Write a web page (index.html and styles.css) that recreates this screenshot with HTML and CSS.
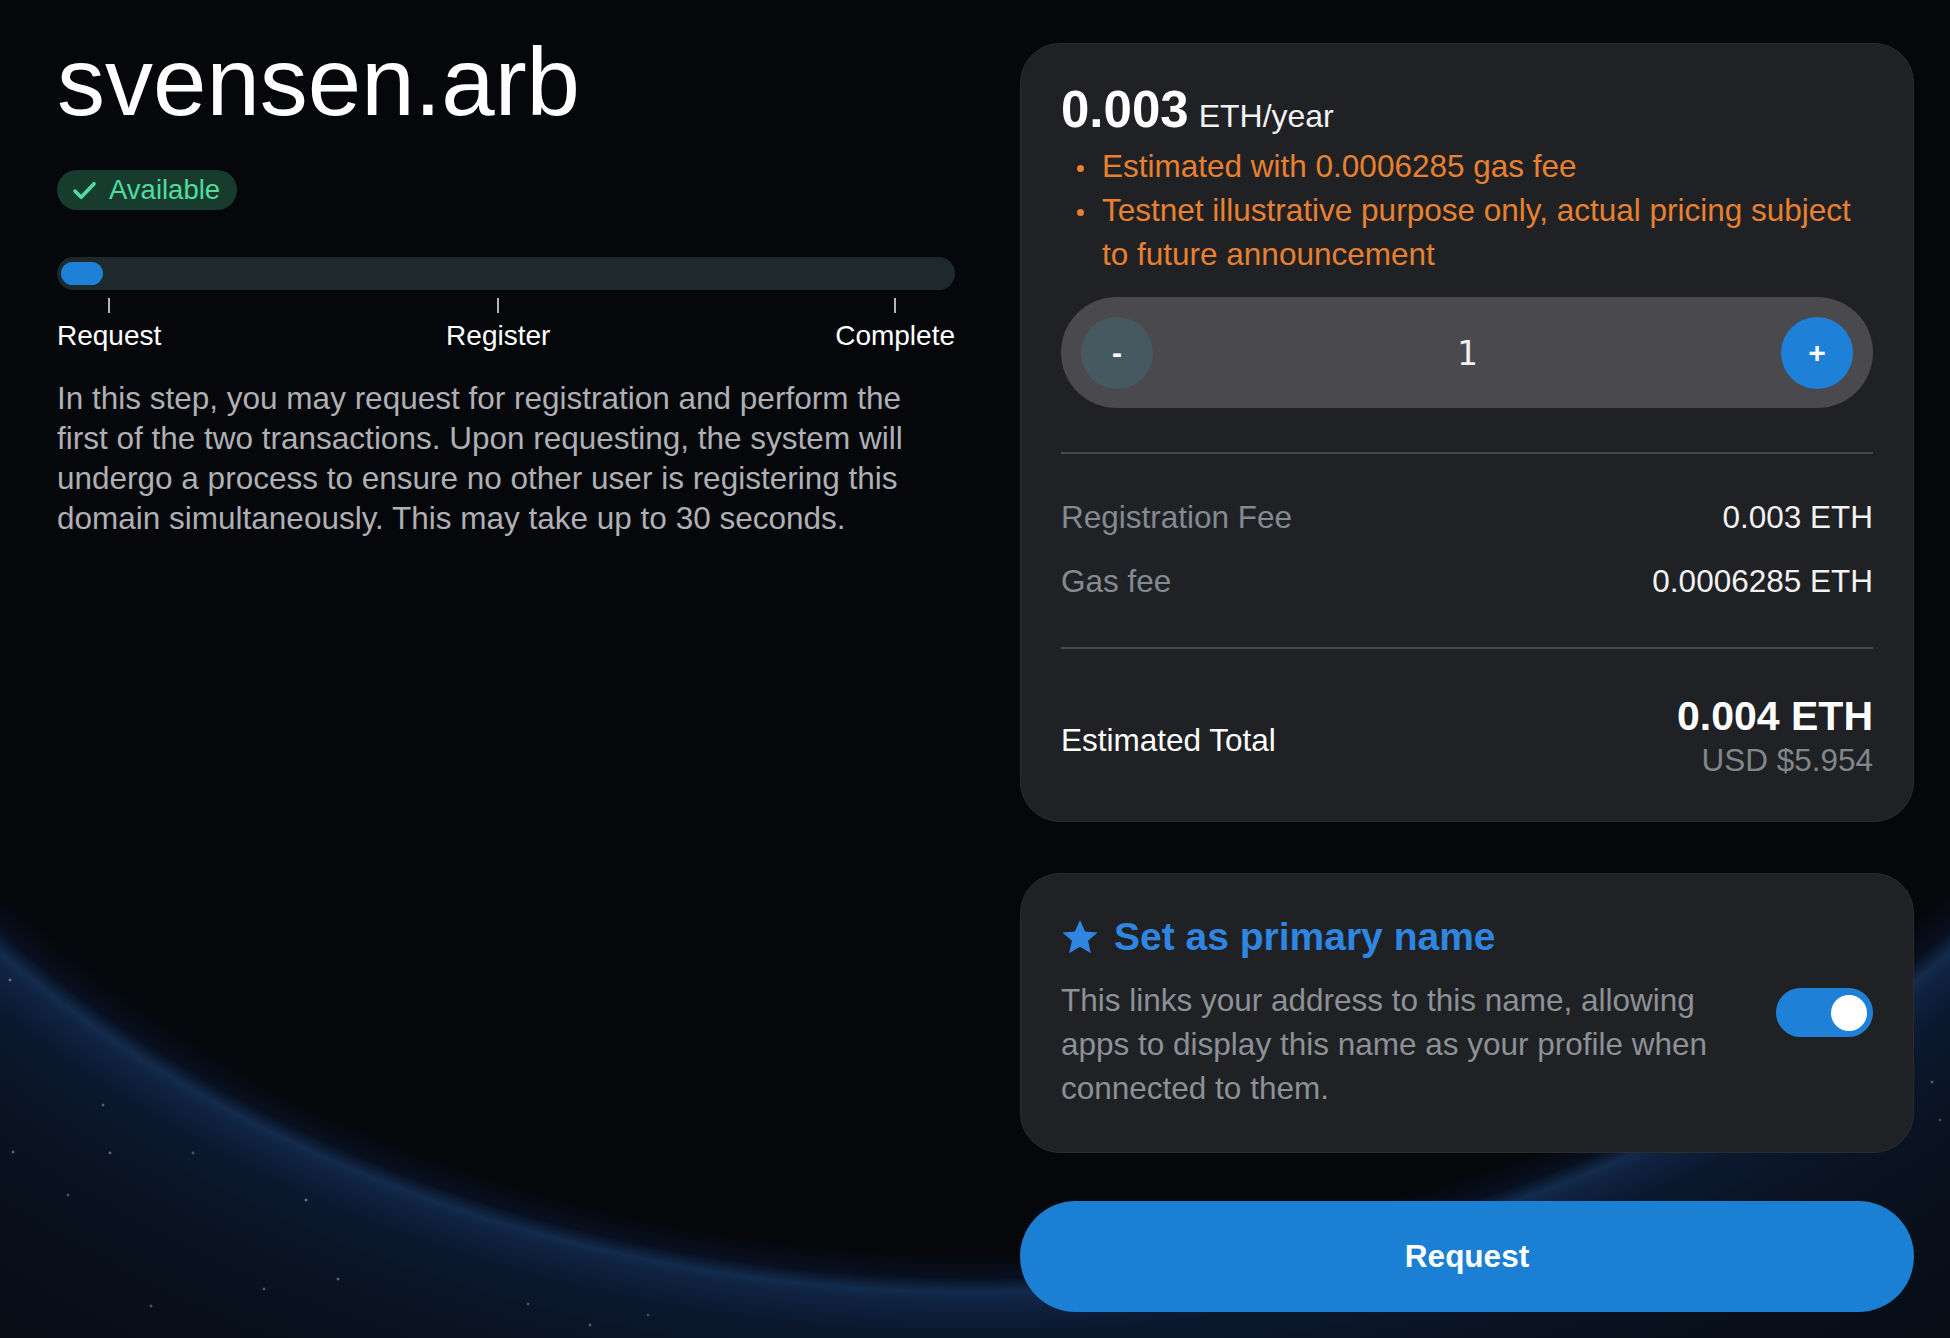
FILE: index.html
```html
<!DOCTYPE html>
<html lang="en">
<head>
    <meta charset="UTF-8">
    <meta name="viewport" content="width=device-width, initial-scale=1.0">
    <title>svensen.arb - Register</title>
    <link rel="stylesheet" href="styles.css">
</head>
<body>
    <main class="page">
        <section class="intro">
            <h1 class="domain">svensen.arb</h1>
            <span class="badge">
                <svg viewBox="0 0 24 24" fill="none" stroke="currentColor" stroke-width="3.2" stroke-linecap="round" stroke-linejoin="round"><polyline points="3.5 12.5 9 18 20.5 6"></polyline></svg>
                Available
            </span>

            <div class="progress"><div class="progress-fill"></div></div>
            <ol class="steps">
                <li class="step"><span class="tick"></span>Request</li>
                <li class="step"><span class="tick"></span>Register</li>
                <li class="step"><span class="tick"></span>Complete</li>
            </ol>

            <p class="intro-text">In this step, you may request for registration and perform the first of the two transactions. Upon requesting, the system will undergo a process to ensure no other user is registering this domain simultaneously. This may take up to 30 seconds.</p>
        </section>

        <section class="checkout">
            <div class="card price-card">
                <div class="price">
                    <strong class="price-value">0.003</strong>
                    <span class="price-unit">ETH/year</span>
                </div>
                <ul class="notes">
                    <li><span class="dot"></span><span>Estimated with 0.0006285 gas fee</span></li>
                    <li><span class="dot"></span><span>Testnet illustrative purpose only, actual pricing subject to future announcement</span></li>
                </ul>

                <div class="counter">
                    <button class="counter-btn minus">-</button>
                    <span class="counter-value">1</span>
                    <button class="counter-btn plus">+</button>
                </div>

                <div class="fees">
                    <div class="fee-row"><span class="fee-label">Registration Fee</span><span>0.003 ETH</span></div>
                    <div class="fee-row"><span class="fee-label">Gas fee</span><span>0.0006285 ETH</span></div>
                </div>

                <div class="total">
                    <span class="total-label">Estimated Total</span>
                    <div class="total-amount">
                        <div class="total-eth">0.004 ETH</div>
                        <div class="total-usd">USD $5.954</div>
                    </div>
                </div>
            </div>

            <div class="card primary-card">
                <h3 class="primary-title">
                    <svg viewBox="0 0 24 24" fill="currentColor"><path d="M12 1.2l3.2 7.3 7.9.7-6 5.2 1.8 7.8L12 18.1l-6.9 4.1 1.8-7.8-6-5.2 7.9-.7z"/></svg>
                    Set as primary name
                </h3>
                <div class="primary-body">
                    <p class="primary-text">This links your address to this name, allowing apps to display this name as your profile when connected to them.</p>
                    <div class="toggle"><span class="knob"></span></div>
                </div>
            </div>

            <button class="request-btn">Request</button>
        </section>
    </main>
</body>
</html>
```

FILE: styles.css
```css
* {
    box-sizing: border-box;
}
html {
    height: 100%;
    background-color: #05070b;
    background-repeat: no-repeat;
    /* a few stars, then the blue horizon arc round the lower half */
    background-image:
        radial-gradient(circle at 10px 980px, rgba(190,200,220,.5) 0 1px, transparent 1.8px),
        radial-gradient(circle at 103px 1105px, rgba(190,200,220,.4) 0 1px, transparent 1.8px),
        radial-gradient(circle at 13px 1152px, rgba(190,200,220,.45) 0 1px, transparent 1.8px),
        radial-gradient(circle at 110px 1153px, rgba(190,200,220,.45) 0 1px, transparent 1.8px),
        radial-gradient(circle at 193px 1153px, rgba(190,200,220,.35) 0 1px, transparent 1.8px),
        radial-gradient(circle at 68px 1195px, rgba(190,200,220,.35) 0 1px, transparent 1.8px),
        radial-gradient(circle at 306px 1200px, rgba(190,200,220,.5) 0 1px, transparent 1.8px),
        radial-gradient(circle at 264px 1289px, rgba(190,200,220,.4) 0 1px, transparent 1.8px),
        radial-gradient(circle at 338px 1279px, rgba(190,200,220,.45) 0 1px, transparent 1.8px),
        radial-gradient(circle at 151px 1306px, rgba(190,200,220,.35) 0 1px, transparent 1.8px),
        radial-gradient(circle at 528px 1304px, rgba(190,200,220,.35) 0 1px, transparent 1.8px),
        radial-gradient(circle at 590px 1325px, rgba(190,200,220,.4) 0 1px, transparent 1.8px),
        radial-gradient(circle at 648px 1315px, rgba(190,200,220,.3) 0 1px, transparent 1.8px),
        radial-gradient(circle at 1932px 1082px, rgba(190,200,220,.4) 0 1px, transparent 1.8px),
        radial-gradient(circle at 1940px 1120px, rgba(190,200,220,.3) 0 1px, transparent 1.8px),
        radial-gradient(ellipse 1300px 1003px at 975px 290px,
            #05070b 0%, #05070b 96%, #081020 98.5%, #132b4c 99.9%, #0f2240 101%,
            #0b182e 104%, #09121f 112%, #070c16 130%);
}
body {
    margin: 0;
    min-height: 100%;
    font-family: "Liberation Sans", Arial, sans-serif;
    color: #f2f2f2;
}

.page {
    display: flex;
    gap: 65px;
    padding: 34px 36px 0 57px;
}

/* left column */
.intro {
    width: 898px;
    display: flex;
    flex-direction: column;
    align-items: flex-start;
}
.domain {
    margin: 0;
    font-size: 96px;
    line-height: 96px;
    font-weight: 400;
    color: #fff;
}
.badge {
    margin-top: 40px;
    height: 40px;
    display: inline-flex;
    align-items: center;
    gap: 11px;
    padding: 0 17px 0 14px;
    border-radius: 20px;
    background: #173b2d;
    color: #4fdc9f;
    font-size: 27.5px;
}
.badge svg {
    width: 27px;
    height: 27px;
}
.progress {
    margin-top: 47px;
    width: 100%;
    height: 33px;
    padding: 5px 4px;
    border-radius: 17px;
    background: #1d292b;
}
.progress-fill {
    width: 42px;
    height: 23px;
    border-radius: 12px;
    background: #1f80d8;
}
.steps {
    list-style: none;
    margin: 8px 0 0;
    padding: 0;
    width: 100%;
    display: flex;
    justify-content: space-between;
}
.step {
    display: flex;
    flex-direction: column;
    align-items: center;
    gap: 7px;
    font-size: 28px;
    line-height: 32px;
    color: #fff;
}
.tick {
    width: 2px;
    height: 15px;
    background: #b5b5b5;
}
.intro-text {
    margin: 26px 0 0;
    font-size: 31.5px;
    line-height: 40px;
    color: #afb0b4;
}

/* right column */
.checkout {
    width: 894px;
    padding-top: 9px;
    display: flex;
    flex-direction: column;
}
.card {
    background: #202124;
    border: 1px solid #2b2c30;
    border-radius: 40px;
}
.price-card {
    padding: 40px 40px 41px;
}
.price {
    display: flex;
    align-items: baseline;
    gap: 10px;
}
.price-value {
    font-size: 51px;
    line-height: 51px;
    font-weight: 700;
    color: #fff;
}
.price-unit {
    font-size: 32px;
    line-height: 32px;
}
.notes {
    list-style: none;
    margin: 9px 0 0;
    padding: 0;
    color: #e8812f;
    font-size: 31.5px;
    line-height: 44px;
}
.notes li {
    display: flex;
    gap: 18px;
    padding-left: 16px;
}
.dot {
    flex-shrink: 0;
    width: 7px;
    height: 7px;
    margin-top: 21px;
    border-radius: 50%;
    background: currentColor;
}
.counter {
    margin-top: 21px;
    height: 111px;
    padding: 0 20px;
    border-radius: 56px;
    background: #4a494e;
    display: flex;
    align-items: center;
    justify-content: space-between;
}
.counter-btn {
    width: 72px;
    height: 72px;
    padding: 0;
    border: none;
    border-radius: 50%;
    color: #fff;
    font-family: "Liberation Sans", Arial, sans-serif;
    font-size: 30px;
    font-weight: 700;
}
.minus {
    background: #455a60;
}
.plus {
    background: #1f80d8;
}
.counter-value {
    font-family: "DejaVu Sans Mono", "Liberation Mono", monospace;
    font-size: 34px;
    color: #f2f2f2;
}
.fees {
    margin-top: 44px;
    padding: 41px 0 44px;
    border-top: 2px solid #45484d;
    border-bottom: 2px solid #45484d;
    display: flex;
    flex-direction: column;
    gap: 20px;
}
.fee-row {
    display: flex;
    justify-content: space-between;
    font-size: 31.5px;
    line-height: 44px;
}
.fee-label {
    color: #848b90;
}
.total {
    padding-top: 43px;
    display: flex;
    justify-content: space-between;
    align-items: center;
}
.total-label {
    margin-top: 8px;
    font-size: 31.5px;
    line-height: 40px;
    color: #fff;
}
.total-amount {
    text-align: right;
}
.total-eth {
    font-size: 41px;
    line-height: 48px;
    font-weight: 700;
    color: #fff;
}
.total-usd {
    font-size: 31.5px;
    line-height: 40px;
    color: #80878c;
}

.primary-card {
    margin-top: 51px;
    padding: 39px 40px 42px;
}
.primary-title {
    margin: 0;
    display: flex;
    align-items: center;
    gap: 15px;
    color: #2f86e0;
    font-size: 39px;
    line-height: 47px;
    font-weight: 700;
}
.primary-title svg {
    width: 38px;
    height: 38px;
}
.primary-body {
    margin-top: 18px;
    display: flex;
    align-items: flex-start;
    gap: 40px;
}
.primary-text {
    flex: 1;
    margin: 0;
    font-size: 31.5px;
    line-height: 44px;
    color: #8b9196;
}
.toggle {
    flex-shrink: 0;
    margin-top: 10px;
    width: 97px;
    height: 49px;
    padding: 0 6px;
    border-radius: 25px;
    background: #1f80d8;
    display: flex;
    align-items: center;
    justify-content: flex-end;
}
.knob {
    width: 36px;
    height: 36px;
    border-radius: 50%;
    background: #fff;
}
.request-btn {
    margin-top: 48px;
    height: 111px;
    border: none;
    border-radius: 56px;
    background: #1b80d3;
    color: #fff;
    font-family: "Liberation Sans", Arial, sans-serif;
    font-size: 31.5px;
    font-weight: 700;
}
```
